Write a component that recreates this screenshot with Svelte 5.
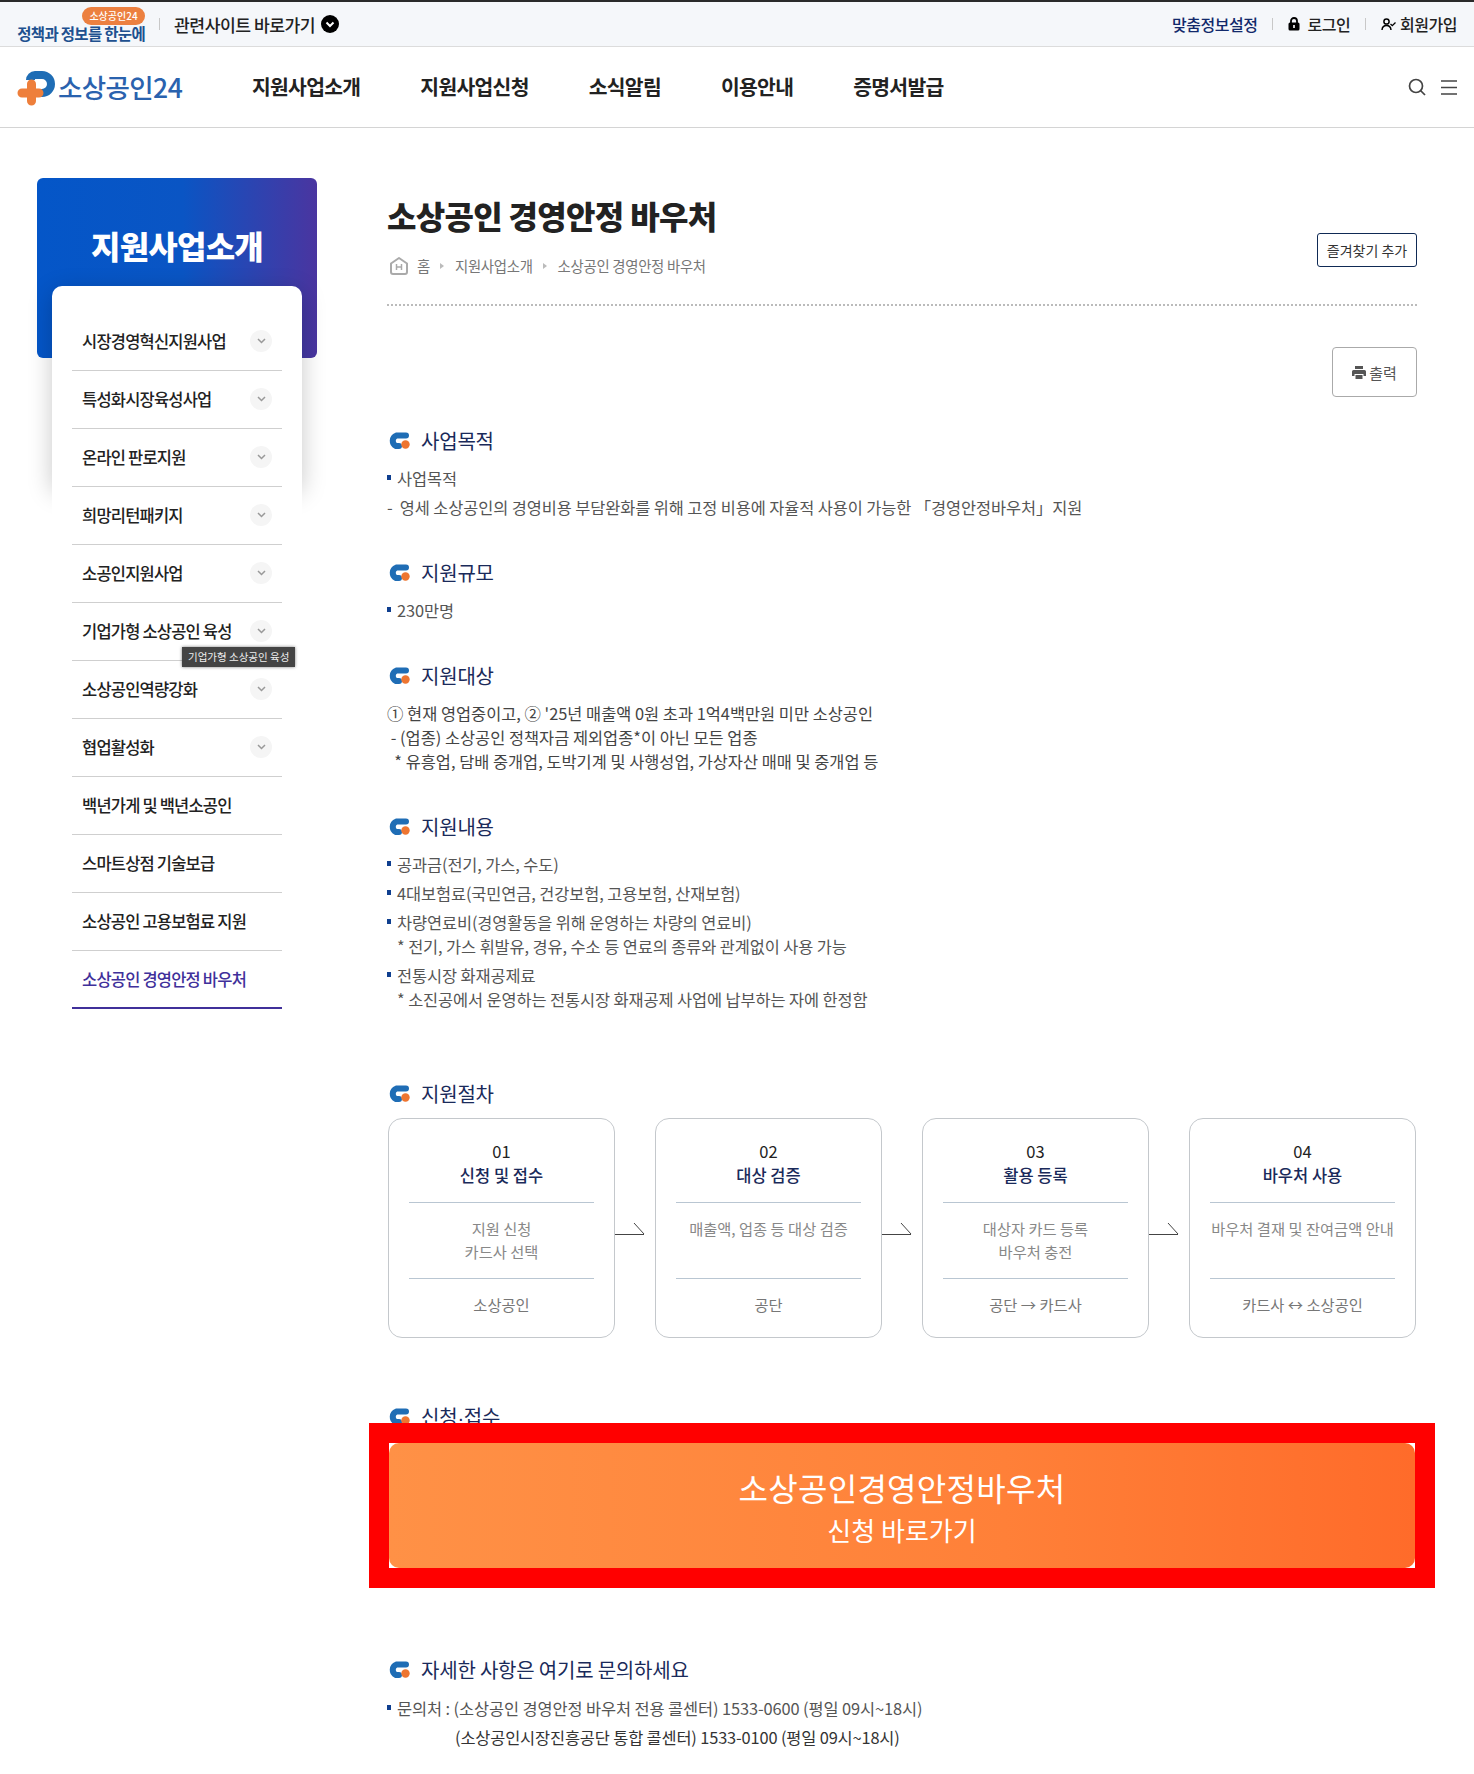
<script>
	let menus = [
		{ name: '시장경영혁신지원사업', sub: true },
		{ name: '특성화시장육성사업', sub: true },
		{ name: '온라인 판로지원', sub: true },
		{ name: '희망리턴패키지', sub: true },
		{ name: '소공인지원사업', sub: true },
		{ name: '기업가형 소상공인 육성', sub: true, tip: true },
		{ name: '소상공인역량강화', sub: true },
		{ name: '협업활성화', sub: true },
		{ name: '백년가게 및 백년소공인' },
		{ name: '스마트상점 기술보급' },
		{ name: '소상공인 고용보험료 지원' },
		{ name: '소상공인 경영안정 바우처', active: true }
	];

	let navs = ['지원사업소개', '지원사업신청', '소식알림', '이용안내', '증명서발급'];

	let steps = [
		{ no: '01', title: '신청 및 접수', desc: ['지원 신청', '카드사 선택'], who: '소상공인' },
		{ no: '02', title: '대상 검증', desc: ['매출액, 업종 등 대상 검증'], who: '공단' },
		{ no: '03', title: '활용 등록', desc: ['대상자 카드 등록', '바우처 충전'], who: '공단 → 카드사' },
		{ no: '04', title: '바우처 사용', desc: ['바우처 결재 및 잔여금액 안내'], who: '카드사 ↔ 소상공인' }
	];
</script>

<div class="page">
	<div class="topbar">
		<div class="promo">
			<span class="promo-badge">소상공인24</span>
			<span class="promo-text">정책과 정보를 한눈에</span>
		</div>
		<i class="bar first"></i>
		<span class="related">관련사이트 바로가기</span>
		<svg class="related-icon" width="18" height="18" viewBox="0 0 18 18">
			<circle cx="9" cy="9" r="9" fill="#000" />
			<path d="M5.5 7.5 9 11l3.5-3.5" fill="none" stroke="#fff" stroke-width="2" />
		</svg>
		<div class="top-right">
			<span class="custom">맞춤정보설정</span>
			<i class="bar"></i>
			<svg width="12" height="14" viewBox="0 0 12 14">
				<path d="M3 6V4a3 3 0 0 1 6 0v2" fill="none" stroke="#000" stroke-width="1.8" />
				<rect x="0.5" y="5.5" width="11" height="8" rx="1.5" fill="#000" />
				<rect x="5.2" y="8" width="1.6" height="3" fill="#fff" />
			</svg>
			<span class="login">로그인</span>
			<i class="bar"></i>
			<svg width="15" height="13" viewBox="0 0 15 13">
				<circle cx="5.5" cy="3.5" r="2.6" fill="none" stroke="#000" stroke-width="1.5" />
				<path d="M1 12c.3-3 2-4.4 4.500-4.400S9.700 9 10 12" fill="none" stroke="#000" stroke-width="1.500" />
				<path d="m9.500 6 1.800 1.700L14.500 4.500" fill="none" stroke="#000" stroke-width="1.300" />
			</svg>
			<span class="join">회원가입</span>
		</div>
	</div>

	<header class="header">
		<div class="logo">
			<svg width="41" height="36" viewBox="0 0 41 36">
				<path d="M9 10A9 9 0 0 1 18 1h7a13 13 0 0 1 0 26h-7v-8h7a5 5 0 0 0 0-10h-7v1z" fill="#1f6db5" />
				<path d="M14.500 14v17M5 23h17" fill="none" stroke="#ee7f3b" stroke-width="9" stroke-linecap="round" />
			</svg>
			<span>소상공인24</span>
		</div>
		<nav class="nav">
			{#each navs as nav}
				<span>{nav}</span>
			{/each}
		</nav>
		<div class="tools">
			<svg width="18" height="18" viewBox="0 0 18 18">
				<circle cx="8" cy="8" r="6.500" fill="none" stroke="#444" stroke-width="1.700" />
				<path d="m12.500 12.500 4.500 4.500" stroke="#444" stroke-width="1.700" />
			</svg>
			<svg width="16" height="15" viewBox="0 0 16 15">
				<path d="M0 1h16M0 7.500h16M0 14h16" stroke="#444" stroke-width="1.700" />
			</svg>
		</div>
	</header>

	<div class="body">
		<aside class="side">
			<div class="side-card">지원사업소개</div>
			<ul class="menu">
				{#each menus as menu}
					<li class:active={menu.active}>
						<span>{menu.name}</span>
						{#if menu.sub}
							<b class="more">
								<svg width="9" height="6" viewBox="0 0 9 6"><path d="m1 1 3.500 3.500L8 1" fill="none" stroke="#999" stroke-width="1.500" /></svg>
							</b>
						{/if}
						{#if menu.tip}
							<em class="tip">{menu.name}</em>
						{/if}
					</li>
				{/each}
			</ul>
		</aside>

		<main class="main">
			<div class="title-area">
				<div>
					<h1>소상공인 경영안정 바우처</h1>
					<div class="crumbs">
						<svg width="20" height="20" viewBox="0 0 20 20">
							<path d="M2 7.500 10 2l8 5.500V16a2 2 0 0 1-2 2H4a2 2 0 0 1-2-2z" fill="none" stroke="#aaa" stroke-width="2" stroke-linejoin="round" />
							<path d="M7.500 8v6M12.500 8v6M7.500 11h5" stroke="#aaa" stroke-width="1.500" />
						</svg>
						<span>홈</span>
						<i class="tri"></i>
						<span>지원사업소개</span>
						<i class="tri"></i>
						<span>소상공인 경영안정 바우처</span>
					</div>
				</div>
				<button class="fav">즐겨찾기 추가</button>
			</div>

			<div class="print-row">
				<button class="print">
					<svg width="14" height="13" viewBox="0 0 14 13">
						<path d="M3 0h8v3H3zM1.500 4h11A1.500 1.500 0 0 1 14 5.500V10h-2.500V8h-9v2H0V5.500A1.500 1.500 0 0 1 1.500 4zM3.500 9h7v4h-7z" fill="#555" />
					</svg>
					출력
				</button>
			</div>

			{#snippet head(text)}
				<h2 class="head">
					<svg width="24" height="18" viewBox="0 0 24 18">
						<path d="M19 4.500H9.500a5.700 5.700 0 0 0-.5 10.500H12" fill="none" stroke="#1f6db5" stroke-width="6" stroke-linecap="round" />
						<circle cx="18.500" cy="13.500" r="4.200" fill="#ee7530" />
					</svg>
					{text}
				</h2>
			{/snippet}

			<section class="s-purpose">
				{@render head('사업목적')}
				<p class="dot">사업목적</p>
				<p class="dash">-&nbsp; 영세 소상공인의 경영비용 부담완화를 위해 고정 비용에 자율적 사용이 가능한 「경영안정바우처」지원</p>
			</section>

			<section class="s-scale">
				{@render head('지원규모')}
				<p class="dot">230만명</p>
			</section>

			<section class="s-target">
				{@render head('지원대상')}
				<div class="plain">
					<p>① 현재 영업중이고, ② '25년 매출액 0원 초과 1억4백만원 미만 소상공인</p>
					<p>&nbsp;- (업종) 소상공인 정책자금 제외업종*이 아닌 모든 업종</p>
					<p>&nbsp; * 유흥업, 담배 중개업, 도박기계 및 사행성업, 가상자산 매매 및 중개업 등</p>
				</div>
			</section>

			<section class="s-content">
				{@render head('지원내용')}
				<p class="dot">공과금(전기, 가스, 수도)</p>
				<p class="dot">4대보험료(국민연금, 건강보험, 고용보험, 산재보험)</p>
				<p class="dot">차량연료비(경영활동을 위해 운영하는 차량의 연료비)</p>
				<p class="note">* 전기, 가스 휘발유, 경유, 수소 등 연료의 종류와 관계없이 사용 가능</p>
				<p class="dot">전통시장 화재공제료</p>
				<p class="note">* 소진공에서 운영하는 전통시장 화재공제 사업에 납부하는 자에 한정함</p>
			</section>

			<section class="s-steps">
				{@render head('지원절차')}
				<div class="steps">
					{#each steps as step, i}
						<div class="step">
							<div class="step-top">
								<strong>{step.no}</strong>
								<span>{step.title}</span>
							</div>
							<div class="step-desc">
								{#each step.desc as line}
									<span>{line}</span>
								{/each}
							</div>
							<div class="step-who">{step.who}</div>
						</div>
						{#if i < steps.length - 1}
							<svg class="arrow" width="40" height="14" viewBox="0 0 40 14">
								<path d="M0 13.500h29M19 2l10 11" fill="none" stroke="#444" stroke-width="1" />
							</svg>
						{/if}
					{/each}
				</div>
			</section>

			<section class="s-apply">
				{@render head('신청·접수')}
				<div class="apply-frame">
					<div class="apply">
						<strong>소상공인경영안정바우처</strong>
						<span>신청 바로가기</span>
					</div>
				</div>
			</section>

			<section class="s-contact">
				{@render head('자세한 사항은 여기로 문의하세요')}
				<p class="dot">문의처 : (소상공인 경영안정 바우처 전용 콜센터) 1533-0600 (평일 09시~18시)</p>
				<p class="contact-2">(소상공인시장진흥공단 통합 콜센터) 1533-0100 (평일 09시~18시)</p>
			</section>
		</main>
	</div>
</div>

<style>
	:global(body) {
		margin: 0;
		background: #fff;
	}

	.page {
		width: 1474px;
		height: 1774px;
		overflow: hidden;
		font-family: "Noto Sans CJK KR", "Noto Sans", sans-serif;
		color: #555;
		font-size: 16.400px;
	}

	p, h1, h2, ul {
		margin: 0;
		padding: 0;
	}

	.topbar {
		display: flex;
		align-items: center;
		box-sizing: border-box;
		height: 47px;
		padding: 0 17px;
		background: #f5f7fa;
		border-top: 2px solid #2a2a2a;
		border-bottom: 1px solid #dcdcdc;
	}

	.promo {
		display: flex;
		flex-direction: column;
		align-items: flex-end;
		width: 128px;
	}

	.promo-badge {
		width: 63px;
		height: 18px;
		line-height: 17px;
		border-radius: 9px;
		background: #ec8040;
		color: #fff;
		font-size: 10px;
		font-weight: 500;
		text-align: center;
	}

	.promo-text {
		margin-top: -1px;
		line-height: 18px;
		color: #20508f;
		font-size: 15.500px;
		font-weight: 700;
		letter-spacing: -0.700px;
		white-space: nowrap;
	}

	.bar {
		width: 1px;
		height: 12px;
		background: #c8c8c8;
		margin: 0 15px;
	}

	.bar.first {
		margin: 0 14px 0 14px;
	}

	.related {
		color: #222;
		font-size: 17.200px;
		font-weight: 500;
		letter-spacing: -0.500px;
		margin-right: 6px;
	}

	.top-right {
		display: flex;
		align-items: center;
		margin-left: auto;
		font-size: 16px;
		font-weight: 500;
		letter-spacing: -0.500px;
		color: #222;
	}

	.custom {
		color: #12296b;
	}

	.login {
		margin-left: 7px;
	}

	.join {
		margin-left: 4px;
	}

	.header {
		display: flex;
		align-items: center;
		box-sizing: border-box;
		height: 81px;
		padding: 0 17px 2px;
		border-bottom: 1px solid #d4d4d4;
	}

	.logo {
		display: flex;
		align-items: center;
		width: 235px;
	}

	.logo svg {
		margin-top: 3px;
	}

	.logo span {
		color: #2a62ae;
		font-size: 26.500px;
		font-weight: 500;
		letter-spacing: -0.600px;
	}

	.nav {
		display: flex;
		gap: 60px;
		color: #222;
		font-size: 20.400px;
		font-weight: 700;
		letter-spacing: -0.700px;
	}

	.tools {
		display: flex;
		align-items: center;
		gap: 15px;
		margin-left: auto;
		margin-top: 2px;
	}

	.body {
		display: flex;
		align-items: flex-start;
		padding: 50px 57px 0 37px;
	}

	.side {
		position: relative;
		flex: none;
		width: 280px;
		margin-right: 70px;
	}

	.side-card {
		box-sizing: border-box;
		height: 180px;
		padding-top: 47px;
		border-radius: 6px;
		background: linear-gradient(90deg, #0456c8 0%, #0a55c4 52%, #4a35a0 100%);
		color: #fff;
		font-size: 32px;
		font-weight: 900;
		letter-spacing: -0.800px;
		line-height: 40px;
		text-align: center;
	}

	.menu {
		position: relative;
		z-index: 1;
		box-sizing: border-box;
		width: 250px;
		margin: -72px 15px 0;
		padding: 27px 20px 0;
		list-style: none;
	}

	.menu::before {
		content: "";
		position: absolute;
		z-index: -1;
		left: 0;
		right: 0;
		top: 0;
		height: 200px;
		border-radius: 10px 10px 0 0;
		box-shadow: 0 6px 24px rgba(0, 0, 0, 0.22);
	}

	.menu::after {
		content: "";
		position: absolute;
		z-index: -1;
		left: 0;
		right: 0;
		top: 0;
		bottom: 0;
		border-radius: 10px 10px 0 0;
		background: #fff;
	}

	.menu li {
		position: relative;
		display: flex;
		align-items: center;
		justify-content: space-between;
		box-sizing: border-box;
		height: 58px;
		padding: 0 10px 1px;
		border-bottom: 1px solid #cfcfcf;
		color: #222;
		font-size: 16.500px;
		font-weight: 500;
		letter-spacing: -0.800px;
		white-space: nowrap;
	}

	.menu li.active {
		color: #40309a;
		border-bottom: 2px solid #40309a;
	}

	.more {
		display: flex;
		align-items: center;
		justify-content: center;
		width: 22px;
		height: 22px;
		border-radius: 50%;
		background: #f5f5f5;
	}

	.tip {
		position: absolute;
		z-index: 2;
		left: 110px;
		top: 44px;
		padding: 0 6px;
		height: 20px;
		line-height: 19px;
		background: #444;
		box-shadow: 0 0 3px rgba(0, 0, 0, 0.5);
		color: #eee;
		font-size: 10.500px;
		font-style: normal;
		font-weight: 400;
		letter-spacing: 0;
	}

	.main {
		flex: 1;
		min-width: 0;
	}

	.title-area {
		display: flex;
		justify-content: space-between;
		align-items: flex-end;
		height: 128px;
		box-sizing: border-box;
		padding-bottom: 28px;
		border-bottom: 2px dotted #bbb;
	}

	h1 {
		color: #222;
		font-size: 32px;
		font-weight: 900;
		letter-spacing: -0.700px;
		line-height: 44px;
	}

	.crumbs {
		display: flex;
		align-items: center;
		gap: 8px;
		margin-top: 18px;
		margin-bottom: -1px;
		padding-left: 2px;
		color: #777;
		font-size: 14.400px;
		letter-spacing: -0.300px;
		line-height: 22px;
	}

	.tri {
		width: 0;
		height: 0;
		margin: 0 2.500px;
		border-left: 4px solid #bbb;
		border-top: 3px solid transparent;
		border-bottom: 3px solid transparent;
	}

	.fav {
		width: 100px;
		height: 34px;
		margin-bottom: 9px;
		padding: 0;
		border: 1px solid #0f2a55;
		border-radius: 3px;
		background: #fff;
		color: #333;
		font: 400 14px "Noto Sans CJK KR", sans-serif;
	}

	.print-row {
		display: flex;
		justify-content: flex-end;
		padding-top: 41px;
	}

	.print {
		display: flex;
		align-items: center;
		justify-content: center;
		gap: 3px;
		width: 85px;
		height: 50px;
		padding: 0;
		border: 1px solid #aaa;
		border-radius: 4px;
		background: #fff;
		color: #555;
		font: 400 15px "Noto Sans CJK KR", sans-serif;
	}

	.head {
		display: flex;
		align-items: center;
		gap: 10px;
		height: 30px;
		color: #1a2a5a;
		font-size: 20px;
		font-weight: 400;
		letter-spacing: -0.200px;
		white-space: nowrap;
	}

	.dot {
		position: relative;
		padding-left: 10px;
		line-height: 29px;
		letter-spacing: -0.100px;
	}

	.dot::before {
		content: "";
		position: absolute;
		left: 0;
		top: 11px;
		width: 4px;
		height: 5px;
		background: #0f3f8f;
	}

	.dash {
		line-height: 29px;
		letter-spacing: -0.100px;
		white-space: nowrap;
	}

	.plain p {
		line-height: 24px;
		color: #444;
	}

	.note {
		padding-left: 10px;
		line-height: 24px;
		letter-spacing: -0.100px;
		margin-top: -3px;
		margin-bottom: 3px;
	}

	.contact-2 {
		padding-left: 68px;
		line-height: 29px;
		letter-spacing: -0.150px;
		color: #333;
	}

	.s-purpose {
		margin-top: 28px;
	}

	.s-purpose .head {
		margin-bottom: 9px;
	}

	.s-scale {
		margin-top: 35px;
	}

	.s-scale .head {
		margin-bottom: 9px;
	}

	.s-target {
		margin-top: 35px;
	}

	.s-target .head {
		margin-bottom: 11px;
	}

	.s-content {
		margin-top: 38px;
	}

	.s-content .head {
		margin-bottom: 9px;
	}

	.s-steps {
		margin-top: 67px;
	}

	.steps {
		display: flex;
		align-items: flex-start;
		margin-top: 10px;
		padding-left: 1px;
	}

	.step {
		flex: none;
		box-sizing: border-box;
		width: 227px;
		height: 220px;
		padding: 21px 20px 0;
		border: 1px solid #c4c8cc;
		border-radius: 14px;
		text-align: center;
	}

	.step-top {
		display: flex;
		flex-direction: column;
		height: 62px;
		border-bottom: 1px solid #b9c6d2;
	}

	.step-top strong {
		margin: -1px 0 1px;
		color: #222;
		font-size: 16.500px;
		font-weight: 400;
		line-height: 24px;
	}

	.step-top span {
		color: #1a2a5a;
		font-size: 16.500px;
		font-weight: 500;
		line-height: 23px;
	}

	.step-desc {
		display: flex;
		flex-direction: column;
		justify-content: flex-start;
		height: 76px;
		padding-top: 14px;
		box-sizing: border-box;
		border-bottom: 1px solid #b9c6d2;
		color: #888;
		font-size: 15.300px;
		line-height: 23px;
		white-space: nowrap;
	}

	.step-who {
		padding-top: 13px;
		color: #777;
		font-size: 15.300px;
		line-height: 24px;
	}

	.arrow {
		flex: none;
		margin-top: 103px;
	}

	.s-apply {
		position: relative;
		margin-top: 63px;
		height: 187px;
	}

	.s-apply .head {
		font-family: "Liberation Sans", "Noto Sans CJK KR", sans-serif;
	}

	.apply-frame {
		position: absolute;
		left: -18px;
		top: 22px;
		box-sizing: border-box;
		width: 1066px;
		height: 165px;
		border: 20px solid #f00;
		background: #fff;
	}

	.apply {
		display: flex;
		flex-direction: column;
		align-items: center;
		box-sizing: border-box;
		height: 125px;
		padding-top: 23px;
		border-radius: 10px;
		background: linear-gradient(90deg, #ff9146 0%, #ff8038 60%, #ff6b2a 100%);
		color: #fff;
	}

	.apply strong {
		font-size: 32px;
		font-weight: 400;
		line-height: 42px;
		letter-spacing: 0.300px;
	}

	.apply span {
		font-size: 26px;
		line-height: 44px;
	}

	.s-contact {
		margin-top: 66px;
	}

	.s-contact .head {
		margin-bottom: 10px;
	}
</style>
